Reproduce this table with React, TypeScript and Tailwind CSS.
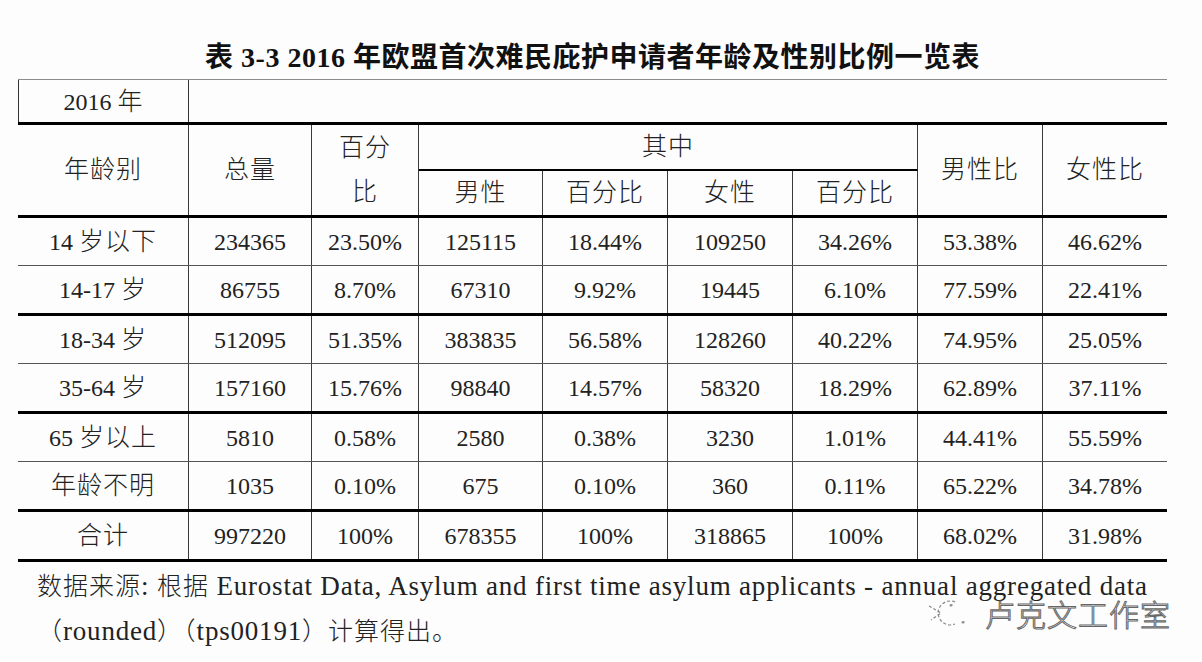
import React from "react";

const CJK = /([\u3000-\u303f\u4e00-\u9fff\uff00-\uffef]+)/;

function T({ s, lat = "" }: { s: string; lat?: string }) {
  const parts = s.split(CJK);
  return (
    <span className="whitespace-pre">
      {parts.map((p, i) =>
        p === "" ? null : CJK.test(p) ? (
          <span key={i} className="text-[25px] tracking-[1px]">
            {p}
          </span>
        ) : (
          <span key={i} className={lat}>
            {p}
          </span>
        )
      )}
    </span>
  );
}

const rows: string[][] = [
  ["14 岁以下", "234365", "23.50%", "125115", "18.44%", "109250", "34.26%", "53.38%", "46.62%"],
  ["14-17 岁", "86755", "8.70%", "67310", "9.92%", "19445", "6.10%", "77.59%", "22.41%"],
  ["18-34 岁", "512095", "51.35%", "383835", "56.58%", "128260", "40.22%", "74.95%", "25.05%"],
  ["35-64 岁", "157160", "15.76%", "98840", "14.57%", "58320", "18.29%", "62.89%", "37.11%"],
  ["65 岁以上", "5810", "0.58%", "2580", "0.38%", "3230", "1.01%", "44.41%", "55.59%"],
  ["年龄不明", "1035", "0.10%", "675", "0.10%", "360", "0.11%", "65.22%", "34.78%"],
  ["合计", "997220", "100%", "678355", "100%", "318865", "100%", "68.02%", "31.98%"],
];
const thick = [false, true, false, true, false, true, true];

const GRID = "grid grid-cols-[171px_123px_107px_124px_125px_125px_125px_125px_124px]";
const V = "border-r border-[#3a3a3a]";

export default function App() {
  return (
    <div className="relative w-[1202px] h-[662px] overflow-hidden bg-[#fdfdfd] text-[#222] font-['Liberation_Serif','Noto_Sans_CJK_SC',serif] font-light text-[24px]">
      <div className="ml-[18px] w-[1149px]">
        {/* Title */}
        <div className="pt-[40px] h-[76px] text-center text-[28px] leading-[36px] font-bold tracking-[0.5px] text-[#111] whitespace-nowrap">
          表 3-3 2016 年欧盟首次难民庇护申请者年龄及性别比例一览表
        </div>

        {/* Table */}
        <div className="mt-[3px] border-t border-[#8c8c8c]">
          <div className="flex h-[42px]">
            <div className="w-[171px] border-l border-r border-[#333] flex items-center justify-center leading-none">
              <T s="2016 年" />
            </div>
          </div>
          <div className="h-[3px] bg-black" />

          {/* Header */}
          <div className={`${GRID} grid-rows-[46px_44px] leading-[44px]`}>
            <div className={`row-span-2 ${V} flex items-center justify-center`}>
              <T s="年龄别" />
            </div>
            <div className={`row-span-2 ${V} flex items-center justify-center`}>
              <T s="总量" />
            </div>
            <div className={`row-span-2 ${V} flex flex-col items-center justify-center`}>
              <div>
                <T s="百分" />
              </div>
              <div>
                <T s="比" />
              </div>
            </div>
            <div className={`col-span-4 ${V} border-b-2 border-b-black flex items-center justify-center`}>
              <T s="其中" />
            </div>
            <div className={`row-span-2 ${V} flex items-center justify-center`}>
              <T s="男性比" />
            </div>
            <div className="row-span-2 flex items-center justify-center">
              <T s="女性比" />
            </div>
            <div className={`${V} flex items-center justify-center`}>
              <T s="男性" />
            </div>
            <div className={`${V} flex items-center justify-center`}>
              <T s="百分比" />
            </div>
            <div className={`${V} flex items-center justify-center`}>
              <T s="女性" />
            </div>
            <div className={`${V} flex items-center justify-center`}>
              <T s="百分比" />
            </div>
          </div>
          <div className="h-[3px] bg-black" />

          {/* Body */}
          {rows.map((r, ri) => (
            <React.Fragment key={ri}>
              <div className={`${GRID} h-[47px]`}>
                {r.map((c, ci) => (
                  <div
                    key={ci}
                    className={`${ci < 8 ? V : ""} flex items-center justify-center leading-none whitespace-nowrap`}
                  >
                    <T s={c} />
                  </div>
                ))}
              </div>
              {thick[ri] ? (
                <div className="h-[3px] bg-black" />
              ) : (
                <div className="h-px bg-[#555]" />
              )}
            </React.Fragment>
          ))}
        </div>
      </div>

      {/* Footer note */}
      <div className="ml-[37px] mt-[2px] leading-[44px] whitespace-nowrap">
        <div>
          <T
            s="数据来源: 根据 Eurostat Data, Asylum and first time asylum applicants - annual aggregated data"
            lat="text-[27px] tracking-[0.8px]"
          />
        </div>
        <div>
          <T s="（rounded）（tps00191）计算得出。" lat="text-[27px] tracking-[0.8px]" />
        </div>
      </div>

      {/* Watermark */}
      <div className="absolute left-[925px] top-[596px] flex items-center gap-[12px]">
        <svg width="48" height="34" viewBox="0 0 48 34" fill="none" stroke="#888" strokeWidth="1.2" strokeDasharray="3 2">
          <path d="M30 6 A12 12 0 1 0 30 28" />
          <path d="M4 10 L16 17 L6 24" />
          <circle cx="26" cy="9" r="1" fill="#888" />
          <circle cx="38" cy="26" r="1" fill="#888" />
        </svg>
        <span className="font-['Noto_Sans_CJK_SC',sans-serif] font-light text-[30px] leading-none text-white [-webkit-text-stroke:1px_#666] tracking-[1px]">
          卢克文工作室
        </span>
      </div>
    </div>
  );
}
